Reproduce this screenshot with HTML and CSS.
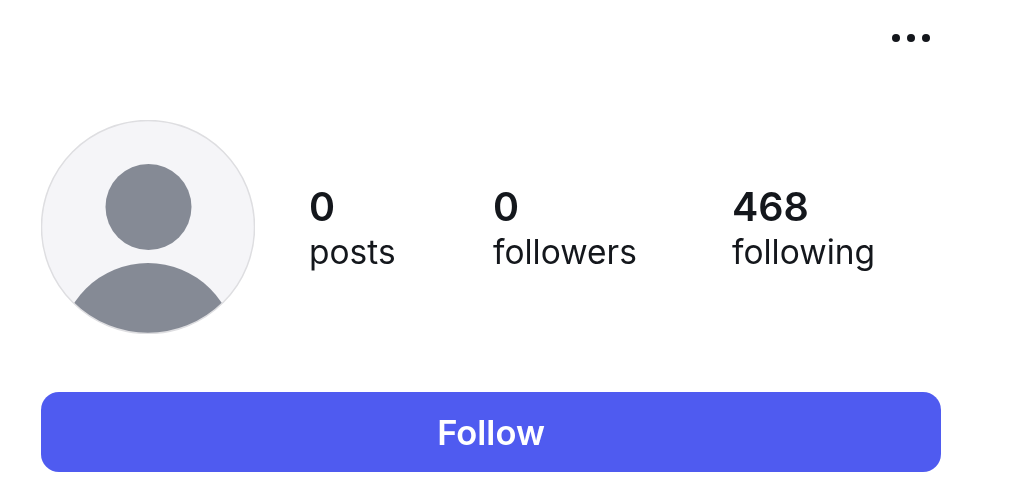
FILE: index.html
```html
<!DOCTYPE html>
<html lang="en">
<head>
<meta charset="UTF-8">
<meta name="viewport" content="width=device-width, initial-scale=1.0">
<title>Profile</title>
<link rel="stylesheet" href="styles.css">
</head>
<body>
<div class="profile">
    <div class="top-bar">
        <div class="more" aria-label="More">
            <span class="dot"></span>
            <span class="dot"></span>
            <span class="dot"></span>
        </div>
    </div>
    <div class="summary">
        <svg class="avatar" viewBox="0 0 214 214" width="214" height="214">
            <defs>
                <clipPath id="avatarClip"><circle cx="107" cy="107" r="106.5"></circle></clipPath>
            </defs>
            <circle cx="107" cy="107" r="106.5" fill="#f5f5f8"></circle>
            <g clip-path="url(#avatarClip)" fill="#858a95">
                <circle cx="107.5" cy="87" r="43"></circle>
                <circle cx="107" cy="231" r="88"></circle>
            </g>
            <circle cx="107" cy="107" r="106.5" fill="none" stroke="#dedee1" stroke-width="1.5"></circle>
        </svg>
        <div class="stats">
            <div class="stat stat-posts">
                <div class="stat-value">0</div>
                <div class="stat-label">posts</div>
            </div>
            <div class="stat stat-followers">
                <div class="stat-value">0</div>
                <div class="stat-label">followers</div>
            </div>
            <div class="stat">
                <div class="stat-value">468</div>
                <div class="stat-label">following</div>
            </div>
        </div>
    </div>
    <button class="follow-btn">Follow</button>
</div>
</body>
</html>
```
FILE: styles.css
```css
body {
    font-family: 'Inter', 'Liberation Sans', sans-serif;
    margin: 0;
    padding: 0;
    background-color: #fff;
    color: #14171c;
    overflow: hidden;
}
.profile {
    width: 900px;
    margin-left: 41px;
    filter: blur(0.5px);
}
.top-bar {
    display: flex;
    justify-content: flex-end;
    height: 120px;
    padding-top: 34px;
    padding-right: 11px;
    box-sizing: border-box;
}
.more {
    display: flex;
    gap: 7px;
    height: 8px;
}
.dot {
    width: 8px;
    height: 8px;
    border-radius: 50%;
    background-color: #14171c;
}
.summary {
    display: flex;
    align-items: center;
}
.avatar {
    display: block;
    flex-shrink: 0;
}
.stats {
    display: flex;
    margin-left: 54px;
    padding-top: 5px;
}
.stat {
    display: flex;
    flex-direction: column;
}
.stat-posts {
    width: 184px;
}
.stat-followers {
    width: 239px;
}
.stat-value {
    font-size: 39.5px;
    font-weight: 600;
    line-height: 46px;
}
.stat-label {
    font-size: 33.5px;
    font-weight: 400;
    line-height: 45px;
}
.follow-btn {
    display: block;
    width: 900px;
    height: 80px;
    margin-top: 58px;
    background-color: #4f5bf0;
    color: #fff;
    border: none;
    border-radius: 18px;
    font-family: inherit;
    font-size: 34.5px;
    font-weight: 600;
}
```
